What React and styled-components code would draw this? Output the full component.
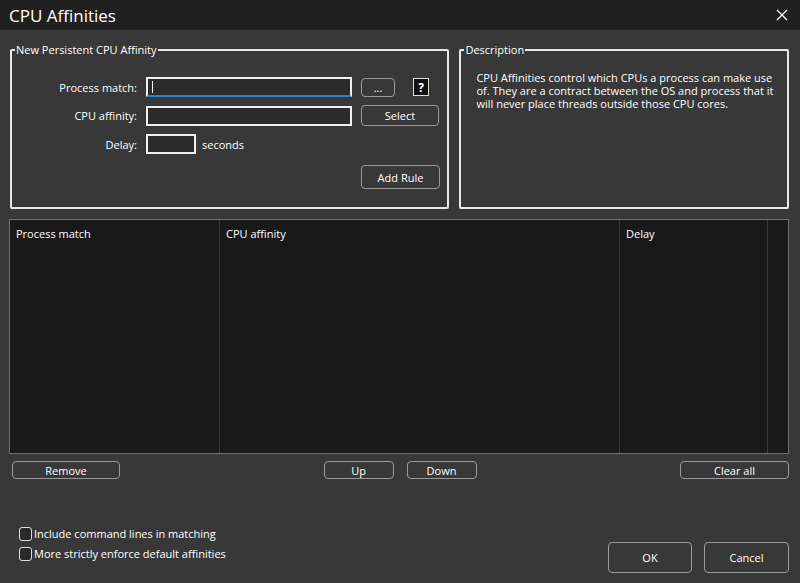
import React from 'react';
import styled, { createGlobalStyle } from 'styled-components';

const Global = createGlobalStyle`
  html, body { margin: 0; background: #383838; }
  body { font-family: "Open Sans", "Noto Sans", sans-serif; font-size: 11px; color: #fff; }
`;

const Window = styled.div`
  width: 800px; height: 583px; display: flex; flex-direction: column; overflow: hidden;
`;
const TitleBar = styled.div`
  height: 30px; background: #202020; display: flex; align-items: center;
  justify-content: space-between; padding: 0 12px 0 9px; font-size: 17px;
`;
const Body = styled.div`
  flex: 1; padding: 12px 11px 10px 9px; display: flex; flex-direction: column;
`;
const TopRow = styled.div`
  display: flex; gap: 10px; height: 167px; padding-left: 1px;
`;
const Group = styled.fieldset`
  margin: 0; border: 2px solid #e8e8e8; border-radius: 2px; padding: 0;
  width: ${p => p.$w}px; box-sizing: border-box; position: relative;
  legend { padding: 0 1px; margin-left: 3px; font-size: 11px; }
`;
const Form = styled.div`
  display: grid; grid-template-columns: 125px 206px 78px; column-gap: 9px; row-gap: 8px;
  padding: 20px 0 0 0; align-items: center;
`;
const Label = styled.div` text-align: right; `;
const Input = styled.div`
  height: 20px; box-sizing: border-box; border: 2px solid #f0f0f0; background: #2b2b2b;
  width: ${p => p.$w || 206}px; position: relative;
  ${p => p.$focus && `border-bottom: 2px solid #2f7fd0;
    &:after { content: ''; position: absolute; left: 4px; top: 2px; width: 1px; height: 12px; background: #fff; }`}
`;
const Btn = styled.button`
  background: #383838; color: #fff; border: 1px solid #9a9a9a; border-radius: 4px;
  font: inherit; font-size: 11px; height: ${p => p.$h || 19}px; width: ${p => p.$w}px; padding: 0; margin: 0;
`;
const Inline = styled.div` display: flex; align-items: center; gap: ${p => p.$gap || 6}px; `;
const Help = styled.div`
  width: 14px; height: 16px; border: 1px solid #ddd; background: #111; font-weight: bold;
  display: flex; align-items: center; justify-content: center; font-size: 12px; margin-left: 12px;
`;
const DescText = styled.p` margin: 14px 8px 0 15px; line-height: 13px; `;
const List = styled.div`
  margin-top: 10px; height: 233px; background: #191919; border: 1px solid #707070;
  display: grid; grid-template-columns: 210px 400px 148px 1fr;
`;
const Col = styled.div`
  border-right: 1px solid #3a3a3a; padding: 6px 6px; &:last-child { border: none; }
`;
const ButtonRow = styled.div`
  display: flex; align-items: center; margin-top: 7px; padding-left: 3px;
`;
const Spacer = styled.div` flex: ${p => p.$f || 1}; `;
const Bottom = styled.div`
  margin-top: auto; display: flex; align-items: flex-end; justify-content: space-between; padding-left: 10px;
`;
const Checks = styled.div` display: flex; flex-direction: column; gap: 5px; margin-bottom: 12px; `;
const Check = styled.label` display: flex; align-items: center; gap: 2px; `;
const Box = styled.span`
  width: 11px; height: 12px; border: 1px solid #ddd; border-radius: 3px; background: #2a2a2a;
`;

export default function App() {
  return (
    <Window>
      <Global />
      <TitleBar>
        <span>CPU Affinities</span>
        <svg width="12" height="12" viewBox="0 0 12 12"><path d="M1 1L11 11M11 1L1 11" stroke="#fff" strokeWidth="1.3" /></svg>
      </TitleBar>
      <Body>
        <TopRow>
          <Group $w={440}>
            <legend>New Persistent CPU Affinity</legend>
            <Form>
              <Label>Process match:</Label>
              <Input $focus />
              <Inline><Btn $w={34}>...</Btn><Help>?</Help></Inline>
              <Label>CPU affinity:</Label>
              <Input />
              <Btn $w={78} $h={21}>Select</Btn>
              <Label>Delay:</Label>
              <Inline><Input $w={50} /><span>seconds</span></Inline>
              <div />
              <div /><div />
              <Btn $w={79} $h={24} style={{ marginTop: 3 }}>Add Rule</Btn>
            </Form>
          </Group>
          <Group $w={330}>
            <legend>Description</legend>
            <DescText>
              CPU Affinities control which CPUs a process can make use of. They are a contract between the OS and process that it will never place threads outside those CPU cores.
            </DescText>
          </Group>
        </TopRow>
        <List>
          <Col>Process match</Col>
          <Col>CPU affinity</Col>
          <Col>Delay</Col>
          <Col />
        </List>
        <ButtonRow>
          <Btn $w={108} $h={18}>Remove</Btn>
          <Spacer />
          <Btn $w={70} $h={18}>Up</Btn>
          <div style={{ width: 13 }} />
          <Btn $w={70} $h={18}>Down</Btn>
          <Spacer />
          <Btn $w={109} $h={18}>Clear all</Btn>
        </ButtonRow>
        <Bottom>
          <Checks>
            <Check><Box />Include command lines in matching</Check>
            <Check><Box />More strictly enforce default affinities</Check>
          </Checks>
          <Inline $gap={12}>
            <Btn $w={84} $h={31}>OK</Btn>
            <Btn $w={85} $h={31}>Cancel</Btn>
          </Inline>
        </Bottom>
      </Body>
    </Window>
  );
}
